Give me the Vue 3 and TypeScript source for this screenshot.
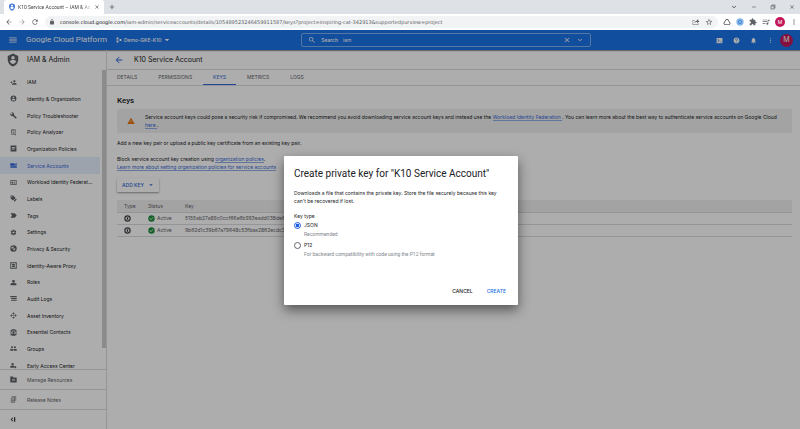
<script setup lang="ts">
import { ref } from 'vue'

const icons = {
  menu: 'M3 18h18v-2H3v2zm0-5h18v-2H3v2zm0-7v2h18V6H3z',
  back: 'M20 11H7.83l5.59-5.59L12 4l-8 8 8 8 1.41-1.41L7.83 13H20v-2z',
  forward: 'M12 4l-1.41 1.41L16.17 11H4v2h12.17l-5.58 5.59L12 20l8-8z',
  reload: 'M17.65 6.35C16.2 4.9 14.21 4 12 4c-4.42 0-7.99 3.58-7.99 8s3.57 8 7.99 8c3.73 0 6.84-2.55 7.73-6h-2.08c-.82 2.33-3.04 4-5.65 4-3.31 0-6-2.69-6-6s2.69-6 6-6c1.66 0 3.14.69 4.22 1.78L13 11h7V4l-2.35 2.35z',
  lock: 'M18 8h-1V6c0-2.76-2.24-5-5-5S7 3.24 7 6v2H6c-1.1 0-2 .9-2 2v10c0 1.1.9 2 2 2h12c1.1 0 2-.9 2-2V10c0-1.1-.9-2-2-2zM9 8V6c0-1.7 1.3-3 3-3s3 1.300 3 3v2H9z',
  search: 'M15.5 14h-.79l-.28-.27C15.41 12.59 16 11.11 16 9.5 16 5.91 13.09 3 9.5 3S3 5.91 3 9.5 5.91 16 9.5 16c1.61 0 3.09-.59 4.23-1.57l.27.28v.79l5 4.99L20.49 19l-4.99-5zm-6 0C7.01 14 5 11.99 5 9.5S7.01 5 9.5 5 14 7.01 14 9.5 11.99 14 9.5 14z',
  close: 'M19 6.41L17.59 5 12 10.59 6.41 5 5 6.41 10.59 12 5 17.59 6.41 19 12 13.41 17.59 19 19 17.59 13.41 12z',
  plus: 'M19 13h-6v6h-2v-6H5v-2h6V5h2v6h6v2z',
  chevron: 'M16.59 8.59L12 13.17 7.41 8.59 6 10l6 6 6-6z',
  minimize: 'M4 11h16v2H4z',
  restore: 'M7 3h14v14h-4v4H3V7h4V3zm2 4h8v8h2V5H9v2zM5 9v10h10V9H5z',
  drop: 'M5 9l7 7 7-7z',
  more: 'M12 8c1.1 0 2-.9 2-2s-.9-2-2-2-2 .9-2 2 .9 2 2 2zm0 2c-1.1 0-2 .9-2 2s.9 2 2 2 2-.9 2-2-.9-2-2-2zm0 6c-1.1 0-2 .9-2 2s.9 2 2 2 2-.9 2-2-.9-2-2-2z',
  help: 'M12 2C6.48 2 2 6.48 2 12s4.480 10 10 10 10-4.480 10-10S17.520 2 12 2zm1 17h-2v-2h2v2zm2.070-7.750l-.9.920C13.450 12.900 13 13.500 13 15h-2v-.5c0-1.100.450-2.100 1.170-2.830l1.240-1.260c.370-.360.590-.860.590-1.410 0-1.100-.9-2-2-2s-2 .9-2 2H8c0-2.210 1.790-4 4-4s4 1.790 4 4c0 .880-.360 1.680-.930 2.250z',
  bell: 'M12 22c1.1 0 2-.9 2-2h-4c0 1.1.9 2 2 2zm6-6v-5c0-3.070-1.640-5.640-4.500-6.320V4c0-.83-.67-1.500-1.500-1.500s-1.500.67-1.500 1.500v.68C7.630 5.360 6 7.920 6 11v5l-2 2v1h16v-1l-2-2z',
  shell: 'M2 3h20v18H2V3zm3 5l4 4-4 4 1.500 1.500L12 12 6.500 6.500 5 8zm8 8v2h6v-2h-6z',
  share: 'M15 4l7 6-7 6v-4c-4 0-6 1-8 4 1-5 3-7 8-8V4zM2 6h6v1.500H3.500v12h14V16H19v5H2V6z',
  star: 'M22 9.240l-7.190-.620L12 2 9.190 8.630 2 9.240l5.460 4.730L5.820 21 12 17.270 18.180 21l-1.630-7.030L22 9.240zM12 15.400l-3.760 2.270 1-4.280-3.320-2.880 4.380-.380L12 6.100l1.710 4.040 4.380.380-3.320 2.880 1 4.280L12 15.400z',
  drive: 'M9 3h6l8 13-3 5H4l-3-5L9 3zm1 3l-6 10 1.500 2.500h13L20 16 14 6h-4z',
  puzzle: 'M20.500 11H19V7c0-1.100-.9-2-2-2h-4V3.500C13 2.120 11.880 1 10.500 1S8 2.120 8 3.500V5H4c-1.100 0-2 .9-2 2v3.800h1.500c1.490 0 2.700 1.210 2.700 2.700s-1.210 2.700-2.700 2.700H2V20c0 1.100.9 2 2 2h3.800v-1.500c0-1.490 1.210-2.700 2.700-2.700s2.700 1.210 2.700 2.700V22H17c1.100 0 2-.9 2-2v-4h1.500c1.380 0 2.500-1.120 2.500-2.500S21.880 11 20.500 11z',
  playlist: 'M2 5h13v2H2zM2 10h13v2H2zM2 15h8v2H2zM17 5h6v3h-4v9a3 3 0 1 1-2-2.800V5z',
  shield: 'M12 1L3 5v6c0 5.550 3.840 10.740 9 12 5.160-1.260 9-6.450 9-12V5l-9-4zm0 4a3 3 0 1 1 0 6 3 3 0 0 1 0-6zm0 14c-2.500-.9-4.500-2.400-5.500-4.500.5-1.700 3.500-2.500 5.500-2.500s5 .8 5.500 2.500c-1 2.100-3 3.600-5.500 4.500z',
  project: 'M2 2h8v8H2zM2 14h8v8H2zM14 8h8v8h-8z',
  warning: 'M1 21h22L12 2 1 21zm12-3h-2v-2h2v2zm0-4h-2v-4h2v4z',
  check: 'M12 1a11 11 0 1 0 0 22 11 11 0 0 0 0-22zm-2 16l-5-5 1.410-1.410L10 14.170l7.590-7.590L19 8l-9 9z',
  keyType: 'M12 1a11 11 0 1 0 0 22 11 11 0 0 0 0-22zm0 4a7 7 0 1 1 0 14 7 7 0 0 1 0-14zm-2.500 3v8h5V8z',
  personAdd: 'M15 12c2.210 0 4-1.790 4-4s-1.790-4-4-4-4 1.790-4 4 1.790 4 4 4zm-9-2V7H4v3H1v2h3v3h2v-3h3v-2H6zm9 4c-2.670 0-8 1.340-8 4v2h16v-2c0-2.660-5.330-4-8-4z',
  account: 'M12 2a10 10 0 1 0 0 20 10 10 0 0 0 0-20zm0 3a3 3 0 1 1 0 6 3 3 0 0 1 0-6zm0 14.200c-2.500 0-4.710-1.280-6-3.220.030-1.990 4-3.080 6-3.080s5.970 1.090 6 3.080c-1.290 1.940-3.500 3.220-6 3.220z',
  wrench: 'M22.700 19l-9.100-9.100c.9-2.300.4-5-1.500-6.900-2-2-5-2.400-7.400-1.300L9 6 6 9 1.600 4.700C.4 7.100.9 10.100 2.900 12.100c1.900 1.900 4.600 2.400 6.900 1.500l9.100 9.100c.4.4 1 .4 1.400 0l2.300-2.300c.5-.4.5-1.100.1-1.400z',
  analyzer: 'M4 2h15v10h-2V4H6v14h4v2H4V2zm4 4h7v2H8V6zm0 4h5v2H8v-2zm7 2a4 4 0 0 1 3.400 6.100l3.100 3.100-1.400 1.400-3.100-3.100A4 4 0 1 1 15 12zm0 2a2 2 0 1 0 0 4 2 2 0 0 0 0-4z',
  policies: 'M2 2h20v20H2V2zm4 5v2h12V7H6zm0 4v2h12v-2H6zm0 4v2h8v-2H6z',
  serviceAccount: 'M1 4h22v5l-5 4-4-3-6 5-3-3-4 2V4zm0 12l4-2 3 3 6-5 4 3 5-4v9H1v-4zM15 5v3h5V5h-5z',
  card: 'M1 4h22v16H1V4zm2 3v10h18V7H3zm2 2h6v6H5V9zm8 0h6v2h-6V9zm0 4h6v2h-6v-2z',
  label: 'M2 2h9l8 8-9 9-8-8V2zm4 2a2 2 0 1 0 0 4 2 2 0 0 0 0-4zm14 8l3 3-7 8-3-3 7-8z',
  tag: 'M2 4h14l7 8-7 8H2l5-8z',
  gear: 'M19.140 12.940c.040-.3.060-.610.060-.940 0-.320-.020-.640-.070-.940l2.030-1.580c.180-.140.230-.410.120-.610l-1.920-3.320c-.120-.220-.370-.290-.590-.220l-2.390.960c-.5-.380-1.030-.7-1.620-.940l-.360-2.540c-.040-.240-.240-.410-.480-.410h-3.840c-.240 0-.430.170-.470.410l-.360 2.540c-.590.240-1.130.570-1.620.940l-2.390-.960c-.220-.080-.470 0-.590.220L2.740 8.870c-.120.210-.080.470.120.610l2.030 1.580c-.050.3-.090.630-.090.940s.020.640.070.940l-2.030 1.580c-.180.140-.230.410-.120.610l1.920 3.320c.120.220.370.290.590.220l2.390-.960c.5.380 1.030.7 1.620.940l.360 2.540c.050.240.240.410.480.410h3.840c.240 0 .440-.170.470-.410l.360-2.540c.590-.240 1.130-.560 1.620-.940l2.390.960c.220.080.470 0 .590-.220l1.920-3.320c.120-.220.070-.470-.120-.610l-2.010-1.580zM12 15.600a3.600 3.600 0 1 1 0-7.200 3.600 3.600 0 0 1 0 7.200z',
  privacy: 'M12 1a11 11 0 1 0 0 22 11 11 0 0 0 0-22zm0 3v8h7c-.6 3.500-3 6.300-7 7.500V12H5V8l7-4z',
  proxy: 'M1 1h22v22H1V1zm3 3v16h16V4H4zm3 3h10v3H7V7zm0 5h10v5H7v-5z',
  roles: 'M12 3a5 5 0 1 1 0 10 5 5 0 0 1 0-10zM2 16c3-3 17-3 20 0v5H2v-5z',
  logs: 'M1 3h22v5H1zM4 10h19v4H4zM4 16h19v4H4z',
  asset: 'M12 1l4 4-4 4-4-4zM19 8l4 4-4 4-4-4zM12 15l4 4-4 4-4-4zM5 8l4 4-4 4-4-4zM12 10l2 2-2 2-2-2z',
  contacts: 'M6 1h12v2h4v18h-4v2H6v-2H2V3h4V1zm6 4a8 8 0 0 0-6 13c2-3 10-3 12 0a8 8 0 0 0-6-13zm0 2a4 4 0 1 1 0 8 4 4 0 0 1 0-8z',
  groups: 'M7 4a3.500 3.500 0 1 1 0 7 3.500 3.500 0 0 1 0-7zm10 0a3.500 3.500 0 1 1 0 7 3.500 3.500 0 0 1 0-7zM1 14h10v6H1zM13 14h10v6H13z',
  early: 'M9 3a4 4 0 1 1 0 8 4 4 0 0 1 0-8zM1 14l8-2 6 2v6H1v-6zM17 13l5 4-2 5-5-4z',
  folder: 'M1 2h9l2 3h11v17H1V2zm11 7a4 4 0 1 0 0 8 4 4 0 0 0 0-8zm0 2a2 2 0 1 1 0 4 2 2 0 0 1 0-4z',
  notes: 'M6 2h15v15h-2V4H6V2zM3 6h14v16H3V6zm2 2v12h10V8H5zm2 2h6v2H7v-2zm0 4h6v2H7v-2z',
  collapse: 'M9 5l2 2-5 5 5 5-2 2-7-7zM14 4h4v16h-4z',
}
type IconName = keyof typeof icons

const navItems: { label: string; icon: IconName; active?: boolean }[] = [
  { label: 'IAM', icon: 'personAdd' },
  { label: 'Identity & Organization', icon: 'account' },
  { label: 'Policy Troubleshooter', icon: 'wrench' },
  { label: 'Policy Analyzer', icon: 'analyzer' },
  { label: 'Organization Policies', icon: 'policies' },
  { label: 'Service Accounts', icon: 'serviceAccount', active: true },
  { label: 'Workload Identity Federat…', icon: 'card' },
  { label: 'Labels', icon: 'label' },
  { label: 'Tags', icon: 'tag' },
  { label: 'Settings', icon: 'gear' },
  { label: 'Privacy & Security', icon: 'privacy' },
  { label: 'Identity-Aware Proxy', icon: 'proxy' },
  { label: 'Roles', icon: 'roles' },
  { label: 'Audit Logs', icon: 'logs' },
  { label: 'Asset Inventory', icon: 'asset' },
  { label: 'Essential Contacts', icon: 'contacts' },
  { label: 'Groups', icon: 'groups' },
  { label: 'Early Access Center', icon: 'early' },
]

const tabs = ['DETAILS', 'PERMISSIONS', 'KEYS', 'METRICS', 'LOGS']
const keys = ['5155ab27a89c0ccf66a6b993eadd038de6f1', '9b62d1c39b67a79648c53fbaa2862ecdc3b7']

const url = ref('/iam-admin/serviceaccounts/details/105489523246459911587/keys?project=inspiring-cat-342913&supportedpurview=project')
const query = ref('iam')
const keyType = ref('json')
</script>

<template>
  <div class="browser">
    <header class="chrome">
      <div class="tabstrip">
        <div class="browser-tab">
          <svg class="i8 fav" viewBox="0 0 24 24"><path :d="icons.shield" /></svg>
          <span class="tab-title">K10 Service Account – IAM &amp; Ad</span>
          <button class="ib" aria-label="Close tab"><svg class="i6" viewBox="0 0 24 24"><path :d="icons.close" /></svg></button>
        </div>
        <button class="ib new-tab" aria-label="New tab"><svg class="i8" viewBox="0 0 24 24"><path :d="icons.plus" /></svg></button>
        <div class="window-controls">
          <button class="ib" aria-label="Search tabs"><svg class="i8" viewBox="0 0 24 24"><path :d="icons.chevron" /></svg></button>
          <button class="ib" aria-label="Minimize"><svg class="i6" viewBox="0 0 24 24"><path :d="icons.minimize" /></svg></button>
          <button class="ib" aria-label="Restore"><svg class="i6" viewBox="0 0 24 24"><path :d="icons.restore" /></svg></button>
          <button class="ib" aria-label="Close window"><svg class="i6" viewBox="0 0 24 24"><path :d="icons.close" /></svg></button>
        </div>
      </div>
      <div class="toolbar">
        <button class="ib" aria-label="Back"><svg class="i8" viewBox="0 0 24 24"><path :d="icons.back" /></svg></button>
        <button class="ib faded" aria-label="Forward"><svg class="i8" viewBox="0 0 24 24"><path :d="icons.forward" /></svg></button>
        <button class="ib" aria-label="Reload"><svg class="i8" viewBox="0 0 24 24"><path :d="icons.reload" /></svg></button>
        <label class="omnibox">
          <svg class="i6" viewBox="0 0 24 24"><path :d="icons.lock" /></svg>
          <span class="address">
            <span class="host">console.cloud.google.com</span>
            <input v-model="url" type="text" aria-label="Address" />
          </span>
          <svg class="i8" viewBox="0 0 24 24"><path :d="icons.share" /></svg>
          <svg class="i8" viewBox="0 0 24 24"><path :d="icons.star" /></svg>
        </label>
        <div class="extensions">
          <button class="ib" aria-label="Drive"><svg class="i8" viewBox="0 0 24 24"><path :d="icons.drive" /></svg></button>
          <button class="ib" aria-label="Extension">
            <svg class="i8" viewBox="0 0 24 24"><circle cx="12" cy="12" r="11" fill="#8ab8ea" /><circle cx="12" cy="12" r="6" fill="#3b82d0" /><circle cx="12" cy="12" r="2.500" fill="#e8f0fe" /></svg>
          </button>
          <button class="ib" aria-label="Extensions"><svg class="i8" viewBox="0 0 24 24"><path :d="icons.puzzle" /></svg></button>
          <button class="ib" aria-label="Media"><svg class="i8" viewBox="0 0 24 24"><path :d="icons.playlist" /></svg></button>
          <button class="avatar small" aria-label="Profile">M</button>
          <button class="ib" aria-label="Menu"><svg class="i8" viewBox="0 0 24 24"><path :d="icons.more" /></svg></button>
        </div>
      </div>
    </header>

    <div class="page">
      <header class="gcp-bar">
        <button class="ib" aria-label="Navigation menu"><svg class="i10" viewBox="0 0 24 24"><path :d="icons.menu" /></svg></button>
        <a class="brand" href="#">Google Cloud Platform</a>
        <button class="project">
          <svg class="i6" viewBox="0 0 24 24"><path :d="icons.project" /></svg>
          Demo-GKE-K10
          <svg class="i8" viewBox="0 0 24 24"><path :d="icons.drop" /></svg>
        </button>
        <div class="search">
          <svg class="i8" viewBox="0 0 24 24"><path :d="icons.search" /></svg>
          <label for="query">Search</label>
          <input id="query" v-model="query" type="text" />
          <button class="ib" aria-label="Clear"><svg class="i8" viewBox="0 0 24 24"><path :d="icons.close" /></svg></button>
          <button class="ib" aria-label="Search options"><svg class="i8" viewBox="0 0 24 24"><path :d="icons.chevron" /></svg></button>
        </div>
        <div class="bar-actions">
          <button class="ib" aria-label="Cloud Shell"><svg class="i7" viewBox="0 0 24 24"><path :d="icons.shell" /></svg></button>
          <button class="ib" aria-label="Help"><svg class="i7" viewBox="0 0 24 24"><path :d="icons.help" /></svg></button>
          <button class="ib" aria-label="Notifications"><svg class="i7" viewBox="0 0 24 24"><path :d="icons.bell" /></svg></button>
          <button class="ib" aria-label="More"><svg class="i7" viewBox="0 0 24 24"><path :d="icons.more" /></svg></button>
        </div>
        <button class="avatar" aria-label="Account">M</button>
      </header>

      <div class="body">
        <aside class="sidebar">
          <h2 class="side-title">
            <svg class="i14" viewBox="0 0 24 24"><path :d="icons.shield" /></svg>
            IAM &amp; Admin
          </h2>
          <div class="nav-wrap">
            <nav class="nav">
              <a v-for="item in navItems" :key="item.label" href="#" :class="{ active: item.active }">
                <svg class="i7" viewBox="0 0 24 24"><path :d="icons[item.icon]" /></svg>
                {{ item.label }}
              </a>
            </nav>
            <div class="scroll"><div class="thumb"></div></div>
          </div>
          <a class="side-foot" href="#"><svg class="i7" viewBox="0 0 24 24"><path :d="icons.folder" /></svg>Manage Resources</a>
          <a class="side-foot" href="#"><svg class="i7" viewBox="0 0 24 24"><path :d="icons.notes" /></svg>Release Notes</a>
          <button class="side-foot dark" aria-label="Collapse menu"><svg class="i7" viewBox="0 0 24 24"><path :d="icons.collapse" /></svg></button>
        </aside>

        <main class="main">
          <div class="title-row">
            <button class="ib blue" aria-label="Back to list"><svg class="i10" viewBox="0 0 24 24"><path :d="icons.back" /></svg></button>
            <h1>K10 Service Account</h1>
          </div>
          <nav class="tabs">
            <a v-for="tab in tabs" :key="tab" href="#" :class="{ active: tab === 'KEYS' }">{{ tab }}</a>
          </nav>
          <section class="content">
            <h2>Keys</h2>
            <div class="alert">
              <svg class="i8" viewBox="0 0 24 24"><path :d="icons.warning" /></svg>
              <p>
                Service account keys could pose a security risk if compromised. We recommend you avoid downloading service account keys and instead use the
                <a class="link" href="#">Workload Identity Federation </a>. You can learn more about the best way to authenticate service accounts on Google Cloud <a class="link" href="#">here </a>.
              </p>
            </div>
            <p class="intro">Add a new key pair or upload a public key certificate from an existing key pair.</p>
            <p>Block service account key creation using <a class="link" href="#">organization policies</a>.</p>
            <p><a class="link" href="#">Learn more about setting organization policies for service accounts</a></p>
            <button class="add-key">ADD KEY <svg class="i6" viewBox="0 0 24 24"><path :d="icons.drop" /></svg></button>
            <table>
              <thead>
                <tr><th class="c-type">Type</th><th class="c-status">Status</th><th>Key</th></tr>
              </thead>
              <tbody>
                <tr v-for="key in keys" :key="key">
                  <td><svg class="i7" viewBox="0 0 24 24"><path :d="icons.keyType" /></svg></td>
                  <td><span class="status"><svg class="i7" viewBox="0 0 24 24"><path :d="icons.check" /></svg>Active</span></td>
                  <td>{{ key }}</td>
                </tr>
              </tbody>
            </table>
          </section>
        </main>
      </div>

      <div class="backdrop">
        <form class="dialog" role="dialog" aria-labelledby="dialog-title" @submit.prevent>
          <h2 id="dialog-title">Create private key for "K10 Service Account"</h2>
          <p class="desc">Downloads a file that contains the private key. Store the file securely because this key can't be recovered if lost.</p>
          <fieldset>
            <legend>Key type</legend>
            <label class="option">
              <input v-model="keyType" type="radio" name="type" value="json" />
              <span>JSON</span>
              <small>Recommended</small>
            </label>
            <label class="option">
              <input v-model="keyType" type="radio" name="type" value="p12" />
              <span>P12</span>
              <small>For backward compatibility with code using the P12 format</small>
            </label>
          </fieldset>
          <div class="actions">
            <button type="button">CANCEL</button>
            <button type="submit" class="primary">CREATE</button>
          </div>
        </form>
      </div>
    </div>
  </div>
</template>

<style>
body {
  margin: 0;
}
</style>

<style scoped>
* {
  box-sizing: border-box;
}
.browser {
  height: 100vh;
  display: flex;
  flex-direction: column;
  overflow: hidden;
  font: 5px/8px Inter, Roboto, sans-serif;
  color: #202124;
  background: #fff;
}
h1, h2, p {
  margin: 0;
}
a {
  color: inherit;
  text-decoration: none;
}
button, input {
  font: inherit;
  color: inherit;
  border: 0;
  padding: 0;
  background: none;
}
svg {
  display: block;
  flex: none;
  fill: currentColor;
}
.i6 { width: 6px; height: 6px; }
.i7 { width: 7px; height: 7px; }
.i8 { width: 8px; height: 8px; }
.i10 { width: 10px; height: 10px; }
.i14 { width: 14px; height: 14px; }
.ib {
  flex: none;
  display: flex;
}

.tabstrip {
  height: 14px;
  display: flex;
  align-items: center;
  color: #3c4043;
  background: #dee1e6;
}
.browser-tab {
  align-self: stretch;
  width: 100px;
  margin-left: 4px;
  padding: 0 4px;
  display: flex;
  align-items: center;
  gap: 2px;
  background: #fff;
  border-radius: 3px 3px 0 0;
}
.fav {
  color: #4a7fd8;
}
.tab-title {
  flex: 1;
  font-family: Roboto, sans-serif;
  white-space: nowrap;
  mask-image: linear-gradient(90deg, #000 85%, transparent);
}
.new-tab {
  margin-left: 4px;
}
.window-controls {
  margin-left: auto;
  padding-right: 5px;
  display: flex;
  align-items: center;
  gap: 13px;
}
.toolbar {
  height: 16px;
  padding: 0 2px 0 5px;
  display: flex;
  align-items: center;
  gap: 5px;
  color: #5f6368;
  background: #fff;
}
.faded {
  opacity: 0.6;
}
.omnibox {
  flex: 1;
  height: 12px;
  margin-left: 1px;
  padding: 0 5px 0 4px;
  display: flex;
  align-items: center;
  gap: 5px;
  border-radius: 6px;
  background: #f1f3f4;
}
.address {
  flex: 1;
  display: flex;
  font-family: "DejaVu Sans", sans-serif;
}
.address input {
  flex: 1;
  min-width: 0;
}
.host {
  color: #202124;
}
.extensions {
  display: flex;
  align-items: center;
  gap: 5px;
}
.avatar {
  flex: none;
  width: 13px;
  height: 13px;
  border-radius: 50%;
  background: #c2185b;
  color: #fff;
  font-size: 7px;
  text-align: center;
}
.avatar.small {
  width: 10px;
  height: 10px;
  font-size: 5px;
}

.page {
  position: relative;
  flex: 1;
  min-height: 0;
  display: flex;
  flex-direction: column;
}
.gcp-bar {
  flex: none;
  height: 20px;
  padding: 0 7px 0 8px;
  display: flex;
  align-items: center;
  color: #fff;
  background: #1a73e8;
  box-shadow: 0 1px 1px rgba(0, 0, 0, 0.4);
}
.brand {
  margin-left: 8px;
  font-family: Roboto, sans-serif;
  font-size: 8px;
}
.project {
  margin: 0 5px 0 9px;
  display: flex;
  align-items: center;
  gap: 2px;
  font-weight: 500;
}
.search {
  flex: 1;
  max-width: 290px;
  height: 14px;
  margin-left: auto;
  padding: 0 6px;
  display: flex;
  align-items: center;
  gap: 5px;
  border: 1px solid #7fb0f2;
  border-radius: 2px;
}
.search label {
  font-weight: 500;
}
.search input {
  flex: 1;
  min-width: 0;
}
.bar-actions {
  margin: 0 6px 0 auto;
  display: flex;
  align-items: center;
  gap: 10px;
}

.body {
  flex: 1;
  min-height: 0;
  display: flex;
}
.sidebar {
  flex: none;
  width: 107px;
  display: flex;
  flex-direction: column;
  border-right: 1px solid #dadce0;
}
.side-title {
  height: 20px;
  padding-left: 6px;
  display: flex;
  align-items: center;
  gap: 7px;
  font-size: 7px;
  font-weight: 400;
}
.side-title svg {
  color: #5f6368;
}
.nav-wrap {
  flex: 1;
  min-height: 0;
  display: flex;
  overflow: hidden;
}
.nav {
  flex: 1;
  height: calc(100% + 5px);
  padding-top: 4px;
  display: grid;
  grid-auto-rows: 1fr;
}
.nav a, .side-foot {
  padding-left: 10px;
  display: flex;
  align-items: center;
  gap: 10px;
  white-space: nowrap;
}
.nav a {
  margin-right: 2px;
}
.nav svg {
  color: #5f6368;
}
.nav a.active, .nav a.active svg {
  color: #3367d6;
}
.nav a.active {
  background: #e8f0fe;
}
.scroll {
  width: 4px;
}
.thumb {
  height: 93%;
  background: #cdcdcd;
}
.side-foot {
  flex: none;
  height: 20px;
  border-top: 1px solid #dadce0;
  color: #5f6368;
}
.dark {
  color: #202124;
}

.main {
  flex: 1;
  min-width: 0;
}
.title-row {
  height: 19px;
  padding-left: 7px;
  display: flex;
  align-items: center;
  gap: 10px;
}
.blue {
  color: #3367d6;
}
h1 {
  font-size: 7px;
  font-weight: 400;
}
.tabs {
  height: 17px;
  padding-left: 10px;
  display: flex;
  gap: 21px;
  border: solid #dadce0;
  border-width: 1px 0;
  color: #5f6368;
}
.tabs a {
  line-height: 15px;
}
.tabs a.active {
  margin: 0 -10px;
  padding: 0 10px;
  color: #3367d6;
  border-bottom: 1px solid #3367d6;
}
.content {
  padding: 10px 8px 0 10px;
}
.content h2 {
  font-family: Roboto, sans-serif;
  font-size: 8px;
  line-height: 10px;
  font-weight: 500;
}
.alert {
  margin-top: 3px;
  padding: 4px 6px 4px 10px;
  display: flex;
  align-items: center;
  gap: 10px;
  border-radius: 1px;
  background: #f1f1f1;
}
.alert svg {
  color: #e8710a;
}
.link {
  color: #3367d6;
  border-bottom: 1px solid #8fabe6;
}
.intro {
  margin: 6px 0 8px;
}
.add-key {
  height: 14px;
  margin-top: 7px;
  padding: 0 5px;
  display: flex;
  align-items: center;
  gap: 4px;
  border-radius: 1px;
  color: #3367d6;
  background: #fff;
  font-weight: 500;
  box-shadow: 0 1px 2px rgba(0, 0, 0, 0.4);
}
table {
  width: 100%;
  margin-top: 8px;
  border-collapse: collapse;
  table-layout: fixed;
  color: #5f6368;
}
th, td {
  height: 12px;
  padding: 0;
  border-bottom: 1px solid #dadce0;
  text-align: left;
  font-weight: 400;
}
th {
  background: #f1f1f1;
}
th:first-child, td:first-child {
  padding-left: 7px;
}
td:first-child {
  color: #3c4043;
}
.c-type { width: 31px; }
.c-status { width: 37px; }
.status {
  display: flex;
  align-items: center;
  gap: 2px;
}
.status svg {
  color: #1e8e3e;
}

.backdrop {
  position: absolute;
  inset: 0;
  padding: 2px 0 0 2px;
  display: grid;
  place-items: center;
  background: rgba(0, 0, 0, 0.32);
}
.dialog {
  width: 234px;
  padding: 11px 10px 10px;
  border-radius: 1px;
  background: #fff;
  box-shadow: 0 5px 12px rgba(0, 0, 0, 0.5);
}
.dialog h2 {
  font-family: Roboto, sans-serif;
  font-size: 10px;
  line-height: 14px;
  font-weight: 400;
  white-space: nowrap;
}
.desc {
  margin-top: 8px;
}
fieldset {
  margin: 7px 0 0;
  padding: 0;
  border: 0;
}
legend {
  padding: 0 0 1px;
}
.option {
  display: grid;
  grid-template-columns: 7px 1fr;
  column-gap: 3px;
  align-items: center;
  margin-bottom: 2px;
}
.option input {
  appearance: none;
  width: 7px;
  height: 7px;
  margin: 0;
  border: 1px solid #5f6368;
  border-radius: 50%;
}
.option input:checked {
  border-color: #1a5fe0;
  background: radial-gradient(circle, #1a5fe0 45%, #fff 60%);
}
.option small {
  grid-column: 2;
  font-family: Roboto, sans-serif;
  font-size: 5px;
  line-height: 10px;
  color: #80868b;
}
.actions {
  margin-top: 26px;
  padding-right: 2px;
  display: flex;
  justify-content: flex-end;
  gap: 14px;
  font-weight: 500;
}
.primary {
  color: #1a73e8;
}
</style>
